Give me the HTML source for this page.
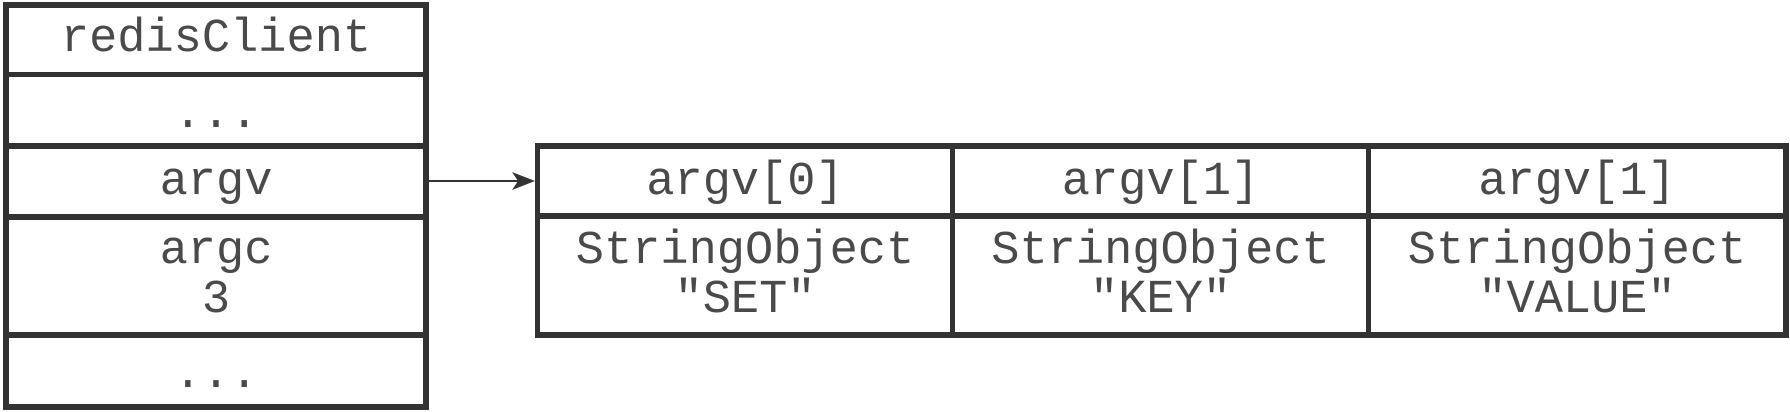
<!DOCTYPE html>
<html><head><meta charset="utf-8"><style>
html,body{margin:0;padding:0;background:#fff;width:1790px;height:412px;overflow:hidden}
.b{position:absolute;background:#333}
.t{position:absolute;font-family:"Liberation Mono",monospace;font-size:47px;color:#4a4a4a;text-align:center;line-height:52px;white-space:pre}
</style></head><body>
<!-- left box -->
<div class="b" style="left:3px;top:2px;width:6px;height:408px"></div>
<div class="b" style="left:423px;top:2px;width:6px;height:408px"></div>
<div class="b" style="left:3px;top:2px;width:426px;height:6px"></div>
<div class="b" style="left:3px;top:72px;width:426px;height:5px"></div>
<div class="b" style="left:3px;top:143px;width:426px;height:6px"></div>
<div class="b" style="left:3px;top:214px;width:426px;height:6px"></div>
<div class="b" style="left:3px;top:332px;width:426px;height:6px"></div>
<div class="b" style="left:3px;top:404px;width:426px;height:6px"></div>
<div class="t" style="left:3px;width:426px;top:14px">redisClient</div>
<div class="t" style="left:3px;width:426px;top:90px">...</div>
<div class="t" style="left:3px;width:426px;top:157px">argv</div>
<div class="t" style="left:3px;width:426px;top:226px">argc</div>
<div class="t" style="left:3px;width:426px;top:275px">3</div>
<div class="t" style="left:3px;width:426px;top:350px">...</div>
<!-- arrow -->
<div class="b" style="left:429px;top:180px;width:90px;height:2px"></div>
<svg style="position:absolute;left:508px;top:171px" width="28" height="20"><path d="M4 1 L27 10 L4 19 L10 10 Z" fill="#333"/></svg>
<!-- right box -->
<div class="b" style="left:535px;top:143px;width:1254px;height:6px"></div>
<div class="b" style="left:535px;top:213px;width:1254px;height:6px"></div>
<div class="b" style="left:535px;top:332px;width:1254px;height:6px"></div>
<div class="b" style="left:535px;top:143px;width:5px;height:195px"></div>
<div class="b" style="left:950px;top:143px;width:5px;height:195px"></div>
<div class="b" style="left:1366px;top:143px;width:5px;height:195px"></div>
<div class="b" style="left:1783px;top:143px;width:6px;height:195px"></div>
<div class="t" style="left:540px;width:410px;top:157px">argv[0]</div>
<div class="t" style="left:955px;width:411px;top:157px">argv[1]</div>
<div class="t" style="left:1371px;width:412px;top:157px">argv[1]</div>
<div class="t" style="left:540px;width:410px;top:226px">StringObject</div>
<div class="t" style="left:955px;width:411px;top:226px">StringObject</div>
<div class="t" style="left:1371px;width:412px;top:226px">StringObject</div>
<div class="t" style="left:540px;width:410px;top:275px">"SET"</div>
<div class="t" style="left:955px;width:411px;top:275px">"KEY"</div>
<div class="t" style="left:1371px;width:412px;top:275px">"VALUE"</div>
</body></html>
